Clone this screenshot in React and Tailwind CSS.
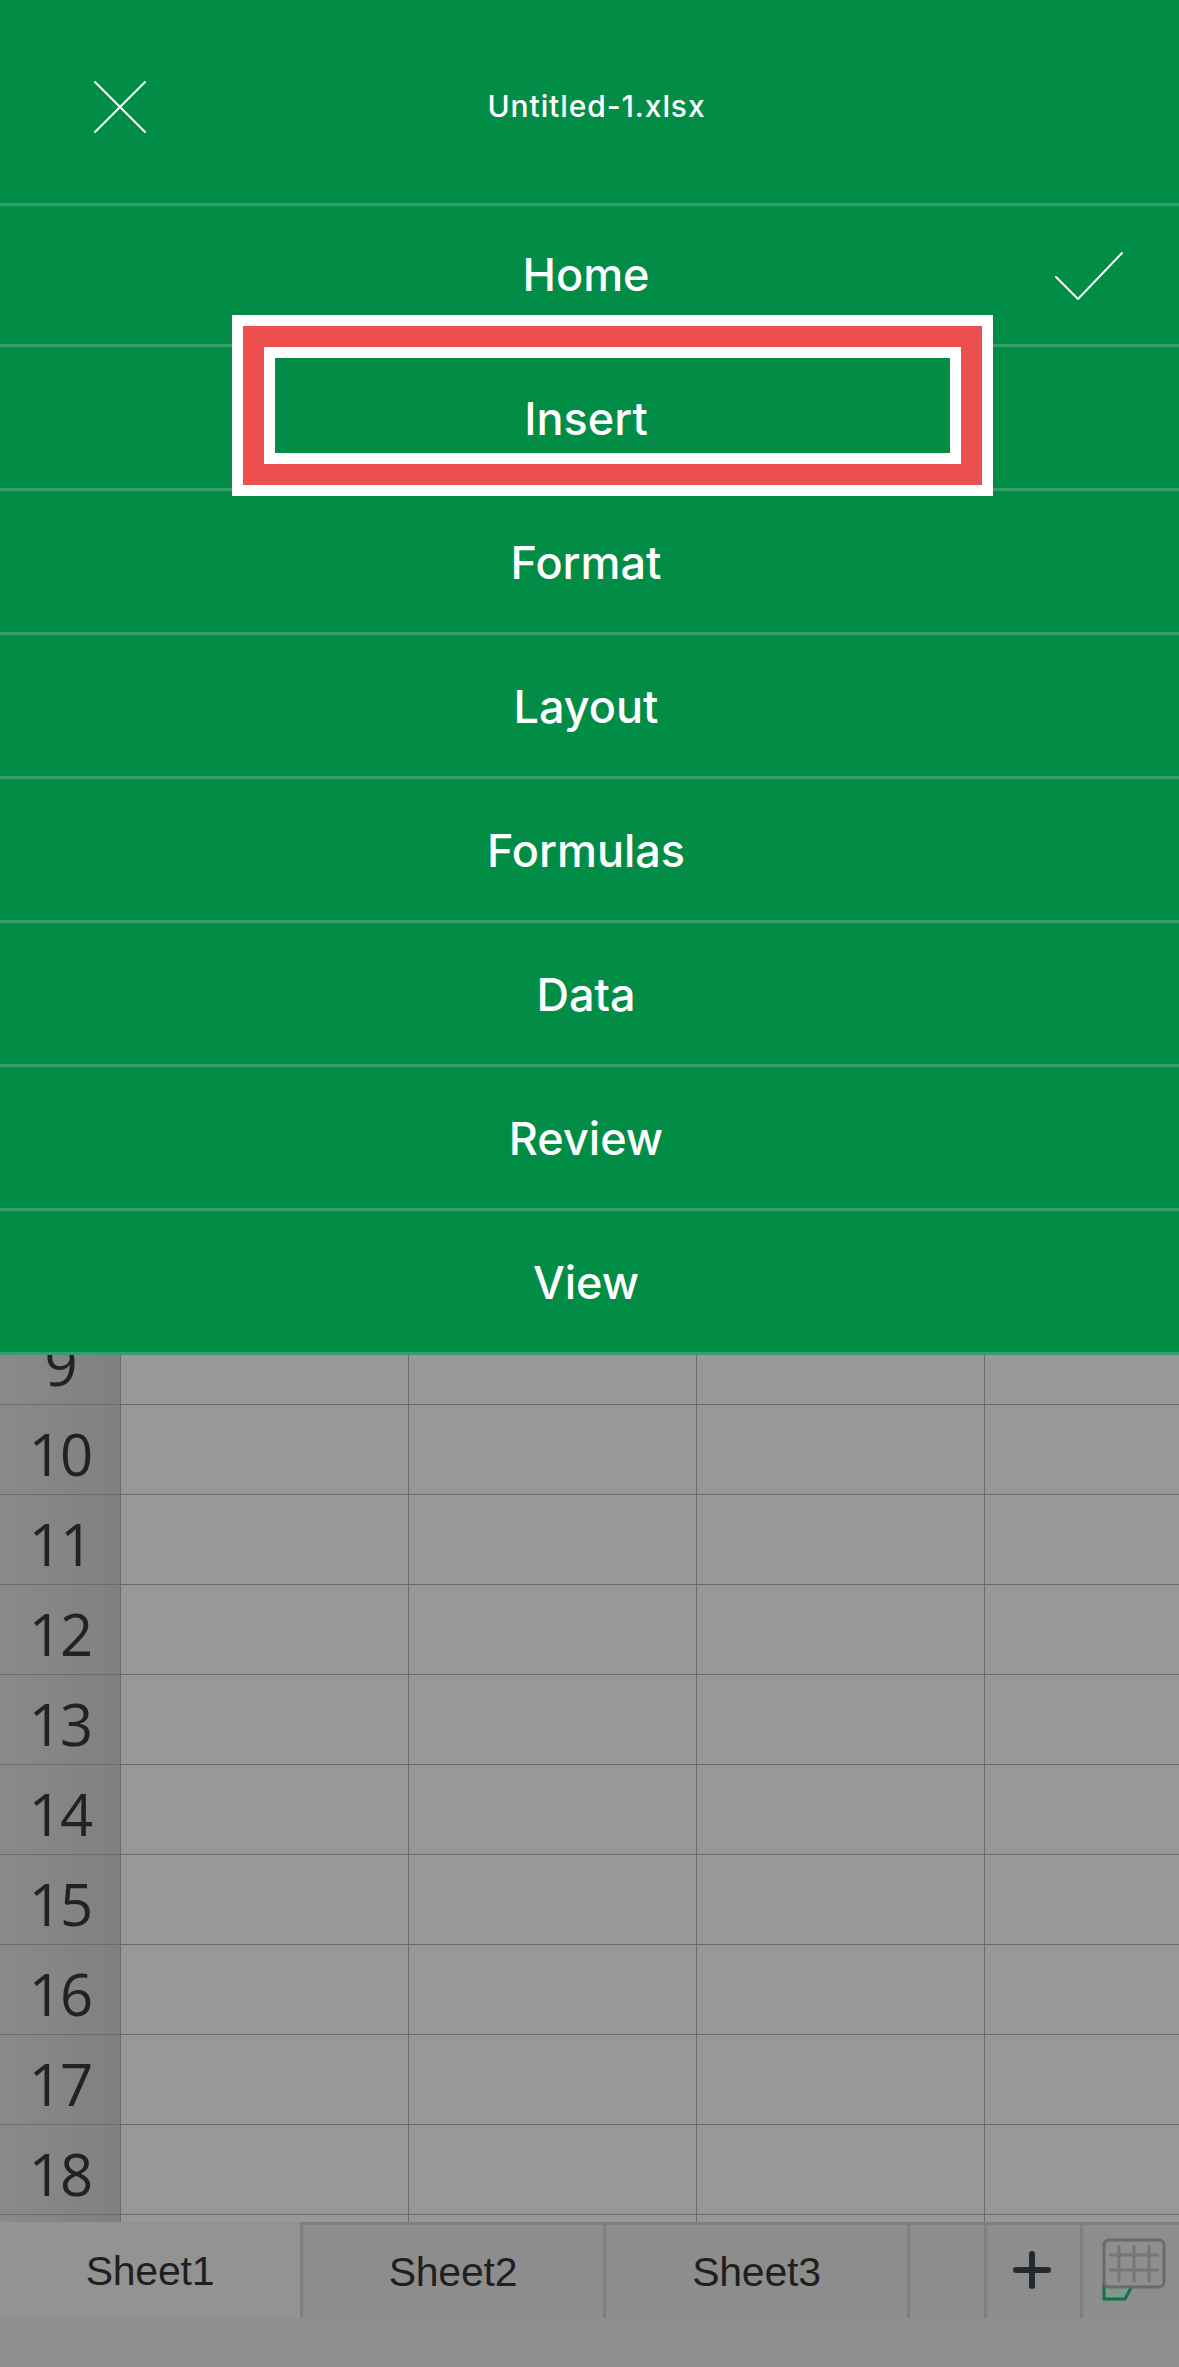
import React from 'react';

const menuItems = ['Home', 'Insert', 'Format', 'Layout', 'Formulas', 'Data', 'Review', 'View'];
const rowNumbers = [10, 11, 12, 13, 14, 15, 16, 17, 18];
const columns = [0, 1, 2, 3];

const GridCells = () => (
    <div className="flex flex-1 h-full">
        {columns.map((col) => (
            <div key={col} className="w-[288px] h-full shrink-0 border-r border-[#6c6c6c]"></div>
        ))}
    </div>
);

const RowHeader = ({ children }) => (
    <div className="w-[121px] h-full shrink-0 flex items-center justify-center pt-[8px] bg-linear-to-r from-[#8a8a8a] to-[#808080] border-r border-[#6c6c6c] font-['Open_Sans',sans-serif] text-[58px] tracking-[-2px] text-[#222222]">
        {children}
    </div>
);

const tabText = "h-full shrink-0 flex items-center justify-center pt-[3px] font-['Liberation_Sans',sans-serif] text-[41px] tracking-[-0.2px] text-[#1f1f1f]";

const App = () => {
    return (
        <div className="w-[1179px] h-[2367px] overflow-hidden bg-[#8f8f8f]">
            {/* Tab menu */}
            <div className="relative bg-[#028d47] font-['Inter',sans-serif] text-white">
                <div className="relative h-[206px] flex items-center justify-center border-b-[3px] border-[#349f6a] pl-[14px] pt-[10px]">
                    <svg className="absolute left-[94px] top-[81px]" width="52" height="52" viewBox="0 0 52 52" fill="none" stroke="white" strokeWidth="2" strokeLinecap="round">
                        <path d="M1 1L51 51M51 1L1 51" />
                    </svg>
                    <span className="text-[30px] font-medium tracking-[0.9px]">Untitled-1.xlsx</span>
                </div>
                {menuItems.map((item) => (
                    item === 'Home' ? (
                        <div key={item} className="relative h-[141px] flex items-center justify-center border-b-[3px] border-[#349f6a] pr-[7px] text-[45px] font-[550]">
                            {item}
                            <svg className="absolute left-[1055px] top-[46px]" width="68" height="49" viewBox="0 0 68 49" fill="none" stroke="white" strokeWidth="2" strokeLinecap="round" strokeLinejoin="round">
                                <path d="M1 25L23 47L67 1" />
                            </svg>
                        </div>
                    ) : (
                        <div key={item} className="h-[144px] flex items-center justify-center border-b-[3px] border-[#349f6a] pr-[7px] pt-[3px] text-[45px] font-[550]">
                            {item}
                        </div>
                    )
                ))}

                {/* Highlight around Insert */}
                <div className="absolute left-[232px] top-[315px] w-[761px] h-[181px] border-[11px] border-white">
                    <div className="w-full h-full border-[21px] border-[#ec4f4d]">
                        <div className="w-full h-full border-[11px] border-white"></div>
                    </div>
                </div>
            </div>

            {/* Sheet grid */}
            <div className="bg-[#989898]">
                <div className="h-[50px] overflow-hidden flex items-end">
                    <div className="flex w-full h-[90px] shrink-0 border-b border-[#6c6c6c]">
                        <RowHeader>9</RowHeader>
                        <GridCells />
                    </div>
                </div>
                {rowNumbers.map((num) => (
                    <div key={num} className="flex h-[90px] border-b border-[#6c6c6c]">
                        <RowHeader>{num}</RowHeader>
                        <GridCells />
                    </div>
                ))}
                <div className="flex h-[7px]">
                    <RowHeader />
                    <GridCells />
                </div>
            </div>

            {/* Sheet tabs */}
            <div className="flex h-[96px] bg-[#8d8d8d]">
                <div className={`w-[300px] bg-[#939393] ${tabText}`}>Sheet1</div>
                <div className={`w-[306px] border-t-[3px] border-x-[3px] border-[#7f7f7f] ${tabText}`}>Sheet2</div>
                <div className={`w-[304px] border-t-[3px] border-r-[3px] border-[#7f7f7f] ${tabText}`}>Sheet3</div>
                <div className="w-[77px] h-full shrink-0 border-t-[3px] border-r-[3px] border-[#7f7f7f]"></div>
                <div className="w-[96px] h-full shrink-0 flex items-center justify-center pr-[3px] pb-[3px] border-t-[3px] border-r-[3px] border-[#7f7f7f]">
                    <svg width="38" height="38" viewBox="0 0 38 38" fill="none" stroke="#222a30" strokeWidth="6" strokeLinecap="round">
                        <path d="M19 3V35M3 19H35" />
                    </svg>
                </div>
                <div className="flex-1 h-full border-t-[3px] border-[#7f7f7f] flex items-start pl-[19px] pt-[13px]">
                    <svg width="64" height="66" viewBox="0 0 64 66" fill="none">
                        <path d="M2 46L31 46L23 61L2 61Z" fill="#7f9a8c" stroke="#14714d" strokeWidth="3" />
                        <rect x="2" y="2" width="60" height="47" rx="5" fill="#8f8f8f" stroke="#6a6a6a" strokeWidth="3" />
                        <path d="M17 7V44M32 7V44M47 7V44M7 17H57M7 32H57" stroke="#767676" strokeWidth="3" />
                    </svg>
                </div>
            </div>
        </div>
    );
};

export default App;
